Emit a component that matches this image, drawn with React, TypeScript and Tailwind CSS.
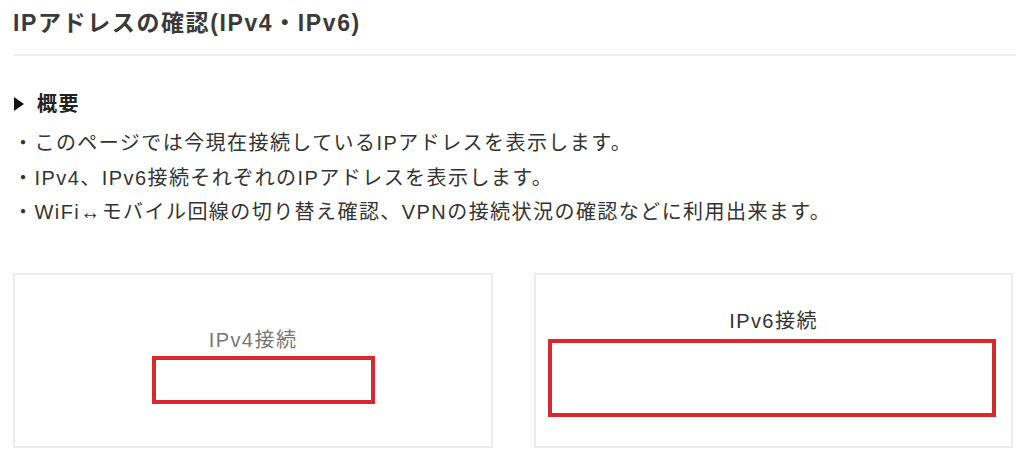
const lines = [
  'このページでは今現在接続しているIPアドレスを表示します。',
  'IPv4、IPv6接続それぞれのIPアドレスを表示します。',
  'WiFi↔モバイル回線の切り替え確認、VPNの接続状況の確認などに利用出来ます。',
];

export default function App() {
  return (
    <div className="w-[1024px] h-[468px] overflow-hidden bg-white text-[#333] tracking-[0.09em] [font-family:'Liberation_Sans','Noto_Sans_CJK_JP',sans-serif]">
      <div className="pl-[13px]">
        {/* ページタイトル */}
        <h1 className="pt-[7px] text-[23px] leading-[33px] font-bold tracking-[0.07em] text-[#3a3a3a]">
          IPアドレスの確認(IPv4・IPv6)
        </h1>
        <div className="mt-[14px] h-[2px] w-[1003px] bg-[#efefef]" />

        {/* 概要 */}
        <div className="mt-[31px] flex items-center h-[34px] text-[20px] font-bold text-[#222]">
          <svg width="10" height="14" viewBox="0 0 10 14" className="ml-[1px] mr-[13px]">
            <path d="M0 0 L10 7 L0 14 Z" fill="#111" />
          </svg>
          <span>概要</span>
        </div>
        <ul className="mt-[5px] text-[20px] leading-[34.5px] text-[#333]">
          {lines.map((t) => (
            <li key={t}>・{t}</li>
          ))}
        </ul>

        {/* 接続結果 */}
        <div className="mt-[43px] flex gap-[41px]">
          <div className="w-[480px] h-[175px] border-2 border-[#ececec]">
            <div className="pt-[51px] text-center text-[20px] leading-[28px] text-[#777]">IPv4接続</div>
            <div className="mt-[2px] ml-[137px] w-[223px] h-[48px] border-4 border-[#d9272e]" />
          </div>
          <div className="w-[479px] h-[175px] border-2 border-[#ececec]">
            <div className="pt-[32px] text-center text-[20px] leading-[28px] text-[#333]">IPv6接続</div>
            <div className="mt-[4px] ml-[12px] w-[448px] h-[78px] border-4 border-[#d9272e]" />
          </div>
        </div>
      </div>
    </div>
  );
}
